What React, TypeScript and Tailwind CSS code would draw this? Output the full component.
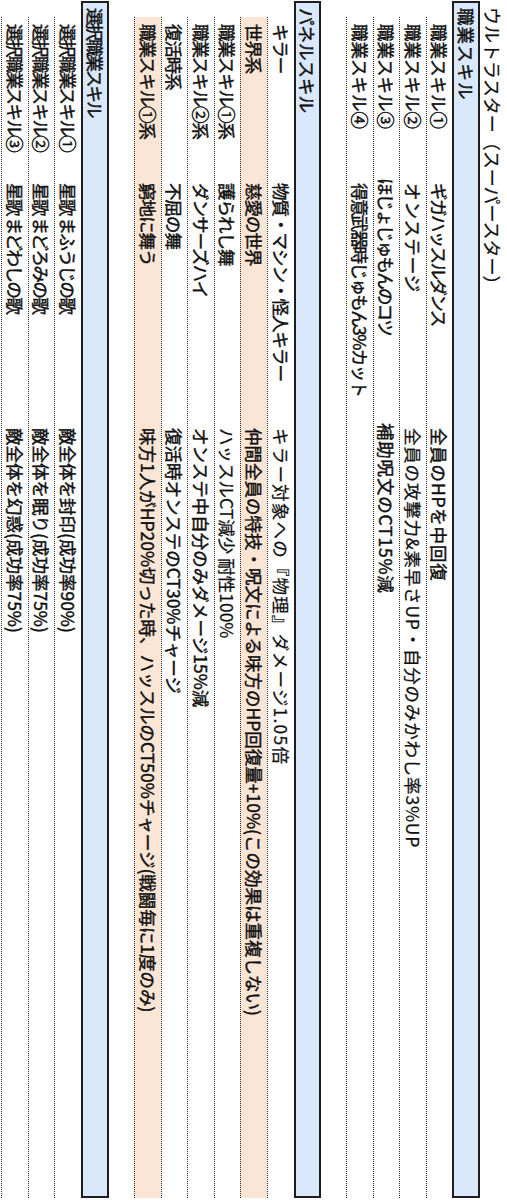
import React from "react";

type Row = {
  a: string;
  b: string;
  c: string;
  peach?: boolean;
  thin?: boolean;
  bCls?: string;
  cCls?: string;
};

const sec1: Row[] = [
  { a: "職業スキル①", b: "ギガハッスルダンス", c: "全員のHPを中回復", bCls: "tracking-[-1.6px]" },
  {
    a: "職業スキル②",
    b: "オンステージ",
    c: "全員の攻撃力&素早さUP・自分のみかわし率3%UP",
    thin: true,
    bCls: "tracking-[1px]",
  },
  { a: "職業スキル③", b: "ほじょじゅもんのコツ", c: "補助呪文のCT15%減", bCls: "tracking-[-1.8px] -ml-[5px]" },
  { a: "職業スキル④", b: "得意武器時じゅもん3%カット", c: "", bCls: "tracking-[-1.6px]" },
];

const sec2: Row[] = [
  {
    a: "キラー",
    b: "物質・マシン・怪人キラー",
    c: "キラー対象への『物理』ダメージ1.05倍",
    thin: true,
    cCls: "tracking-[1.2px]",
  },
  {
    a: "世界系",
    b: "慈愛の世界",
    c: "仲間全員の特技・呪文による味方のHP回復量+10%(この効果は重複しない)",
    peach: true,
  },
  { a: "職業スキル①系", b: "護られし舞", c: "ハッスルCT減少 耐性100%", thin: true },
  { a: "職業スキル②系", b: "ダンサーズハイ", c: "オンステ中自分のみダメージ15%減" },
  { a: "復活時系", b: "不屈の舞", c: "復活時オンステのCT30%チャージ" },
  {
    a: "職業スキル①系",
    b: "窮地に舞う",
    c: "味方1人がHP20%切った時、ハッスルのCT50%チャージ(戦闘毎に1度のみ)",
    peach: true,
  },
];

const sec3: Row[] = [
  { a: "選択職業スキル①", b: "星歌 まふうじの歌", c: "敵全体を封印(成功率90%)" },
  { a: "選択職業スキル②", b: "星歌 まどろみの歌", c: "敵全体を眠り(成功率75%)" },
  { a: "選択職業スキル③", b: "星歌 まどわしの歌", c: "敵全体を幻惑(成功率75%)" },
];

const BOLD = "[-webkit-text-stroke:0.45px_#111]";
const MED = "[-webkit-text-stroke:0.25px_#111]";

function Header({ label, cls }: { label: string; cls: string }) {
  return (
    <div
      className={`ml-[1px] w-[1197px] h-[27.5px] shrink-0 border-2 border-[#1e1e1e] bg-[#dae8fb] flex items-center pl-[5px] text-[#111] ${BOLD} ${cls}`}
    >
      {label}
    </div>
  );
}

function Rows({ rows, aCls, bCls, cCls }: { rows: Row[]; aCls: string; bCls: string; cCls: string }) {
  return (
    <>
      {rows.map((r, i) => (
        <div
          key={i}
          className={`ml-[17px] w-[1181px] h-[26.6px] shrink-0 border-b-[1.5px] border-dotted border-[#2a2a2a] flex items-center text-[17.5px] text-[#111] ${
            r.peach ? "bg-[#fbe5d5]" : "bg-white"
          }`}
        >
          <div className={`w-[166px] shrink-0 pl-[7px] whitespace-nowrap ${BOLD} ${aCls}`}>{r.a}</div>
          <div className={`w-[245px] shrink-0 whitespace-nowrap ${BOLD} ${r.bCls ?? bCls}`}>{r.b}</div>
          <div className={`whitespace-nowrap ${r.thin ? MED : BOLD} ${r.cCls ?? cCls}`}>{r.c}</div>
        </div>
      ))}
    </>
  );
}

export default function App() {
  return (
    <div className="relative w-[507px] h-[1200px] overflow-hidden bg-white">
      <div className="absolute left-0 top-0 w-[1200px] h-[507px] origin-top-left translate-x-[507px] rotate-90 bg-white font-['Noto_Sans_CJK_JP','Noto_Sans_CJK_SC',sans-serif] font-normal leading-none">
        <div className="flex flex-col">
          <div className="h-[27px] shrink-0 flex items-center pl-[7px] text-[18px] text-[#111] [-webkit-text-stroke:0.2px_#111]">
            ウルトラスター（スーパースター）
          </div>
          <Header label="職業スキル" cls="text-[17.5px] tracking-[1px]" />
          <Rows rows={sec1} aCls="" bCls="" cCls="tracking-[0.8px]" />
          <div className="h-[25px] shrink-0" />
          <Header label="パネルスキル" cls="text-[17.5px]" />
          <Rows rows={sec2} aCls="tracking-[-1.1px]" bCls="tracking-[-1px]" cCls="" />
          <div className="h-[25.5px] shrink-0" />
          <Header label="選択職業スキル" cls="text-[17.5px] tracking-[-2px]" />
          <Rows rows={sec3} aCls="tracking-[-1.6px]" bCls="tracking-[-1.5px]" cCls="" />
        </div>
      </div>
    </div>
  );
}
